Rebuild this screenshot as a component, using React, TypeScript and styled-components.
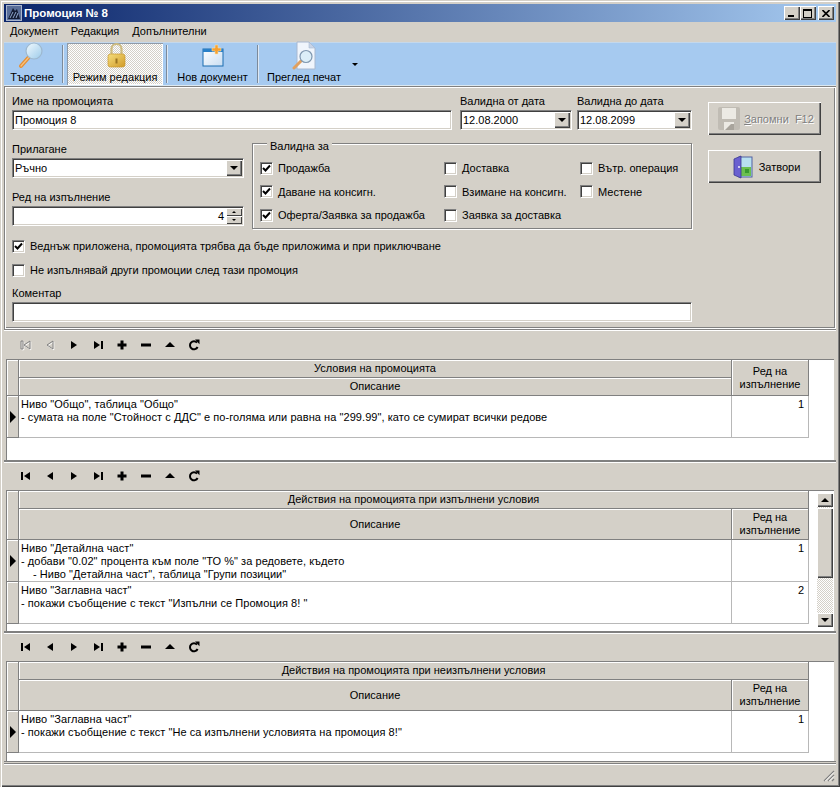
import React from "react";
import styled, { createGlobalStyle } from "styled-components";

const FACE = "#D4D0C8";
const Global = createGlobalStyle`
  html, body { margin: 0; padding: 0; background: ${FACE}; }
  body { font-family: "Liberation Sans", Arial, sans-serif; font-size: 11px; color: #000; }
  * { box-sizing: border-box; }
`;

const Win = styled.div`
  width: 840px; height: 787px; background: ${FACE}; display: flex; flex-direction: column;
  padding: 4px; overflow: hidden;
  box-shadow: inset 1px 1px 0 ${FACE}, inset 2px 2px 0 #fff, inset -1px -1px 0 #404040, inset -2px -2px 0 #808080;
`;
const TitleBar = styled.div`
  height: 18px; flex: none; display: flex; align-items: center; padding: 0 2px;
  background: linear-gradient(90deg, #0A246A, #A6CAF0);
`;
const TitleText = styled.span`
  color: #fff; font-weight: bold; font-size: 11.5px; margin-left: 2px; flex: 1;
`;
const CapBtn = styled.div<{ $gap?: number }>`
  width: 16px; height: 14px; background: ${FACE}; margin-left: ${p => p.$gap ?? 0}px;
  box-shadow: inset 1px 1px 0 #fff, inset -1px -1px 0 #404040, inset -2px -2px 0 #808080;
  display: flex; align-items: center; justify-content: center;
`;
const MenuBar = styled.div`
  height: 20px; flex: none; display: flex; align-items: center; gap: 12px; padding: 0 6px 2px;
`;
const MenuItem = styled.span<{ $ml?: number }>`font-size: 11px; margin-left: ${p => p.$ml ?? 0}px;`;
const ToolBar = styled.div`
  height: 44px; flex: none; display: flex; align-items: stretch; background: #A6CAF0;
  border-top: 1px solid #C4D8EC; border-bottom: 1px solid #DCE8F0;
`;
const ToolBtn = styled.div<{ $w: number; $on?: boolean }>`
  width: ${p => p.$w}px; display: flex; flex-direction: column; align-items: center; justify-content: flex-end;
  padding-bottom: 1px; line-height: 13px; position: relative;
  ${p => p.$on ? `
    background: repeating-conic-gradient(#fff 0 25%, ${FACE} 0 50%) 0 0 / 2px 2px;
    box-shadow: inset 1px 1px 0 #8E9AA8, inset -1px -1px 0 #fff;
  ` : ""}
  svg { flex: none; margin-bottom: 1px; }
`;
const ToolSep = styled.div<{ $l: number; $r: number }>`
  width: 2px; margin: 2px ${p => p.$r}px 2px ${p => p.$l}px;
  background: linear-gradient(90deg, #7C8A9A 50%, #DDE8F4 50%);
`;
const Caret = styled.div`
  width: 0; height: 0; align-self: center; margin: 0 0 0 4px;
  border-left: 3px solid transparent; border-right: 3px solid transparent; border-top: 3px solid #000;
`;

const Form = styled.div`
  height: 243px; flex: none; display: flex; padding: 8px 0 0 8px;
  box-shadow: inset 1px 1px 0 #808080, inset 2px 2px 0 #fff, inset -1px -1px 0 #fff, inset -2px -2px 0 #808080;
`;
const FormLeft = styled.div`width: 680px; flex: none; display: flex; flex-direction: column;`;
const FormRight = styled.div`
  margin: 8px 0 0 16px; width: 113px; display: flex; flex-direction: column; gap: 15px;
`;
const TopRow = styled.div`display: flex; margin-bottom: 12px;`;
const Field = styled.div<{ $w: number; $mr?: number; $mt?: number }>`
  width: ${p => p.$w}px; margin-right: ${p => p.$mr ?? 0}px; margin-top: ${p => p.$mt ?? 0}px; flex: none;
`;
const Label = styled.div`height: 14px; line-height: 14px; margin-bottom: 2px;`;
const Sunken = styled.div<{ $align?: string }>`
  height: 20px; background: #fff; display: flex; align-items: center; justify-content: space-between;
  padding: 0 2px; line-height: 14px; font-size: 11px;
  border: 1px solid; border-color: #808080 #fff #fff #808080;
  box-shadow: inset 1px 1px 0 #404040, inset -1px -1px 0 ${FACE};
  ${p => p.$align === "right" ? "justify-content: flex-end;" : ""}
`;
const Arrow = styled.div<{ $up?: boolean; $s?: number }>`
  width: 0; height: 0;
  border-left: ${p => p.$s ?? 4}px solid transparent; border-right: ${p => p.$s ?? 4}px solid transparent;
  ${p => `border-${p.$up ? "bottom" : "top"}: ${p.$s ?? 4}px solid #000;`}
`;
const DropBtn = styled.div`
  width: 16px; height: 16px; margin-right: -1px; background: ${FACE}; flex: none;
  display: flex; align-items: center; justify-content: center;
  box-shadow: inset 1px 1px 0 #fff, inset -1px -1px 0 #404040, inset -2px -2px 0 #808080;
`;
const SpinBox = styled.div`display: flex; flex-direction: column; width: 16px; height: 16px; margin: 0 -1px 0 2px; flex: none;`;
const SpinBtn = styled.div`
  flex: 1; background: ${FACE}; display: flex; align-items: center; justify-content: center;
  box-shadow: inset 1px 1px 0 #fff, inset -1px -1px 0 #404040;
`;
const MidRow = styled.div`display: flex;`;
const LeftStack = styled.div`width: 232px; flex: none; display: flex; flex-direction: column;`;
const Group = styled.fieldset`
  margin: -6px 0 0 8px; padding: 6px 0 0 7px; width: 440px; height: 93px; flex: none;
  border: 1px solid #808080; box-shadow: 1px 1px 0 #fff, inset 1px 1px 0 #fff;
  display: grid; grid-template-columns: 184px 136px 1fr; grid-auto-rows: 23.5px; align-content: start;
`;
const Legend = styled.legend`
  margin-left: 7px; padding: 0 3px; line-height: 14px; background: ${FACE}; position: relative; top: 3px;
`;
const CheckRow = styled.label`display: flex; align-items: center; gap: 5px; white-space: nowrap; height: 24px;`;
const CheckBox = styled.span`
  width: 13px; height: 13px; flex: none; background: #fff; display: flex; align-items: center; justify-content: center;
  border: 1px solid; border-color: #808080 #fff #fff #808080;
  box-shadow: inset 1px 1px 0 #404040, inset -1px -1px 0 ${FACE};
`;
const CheckStack = styled.div`margin-top: 5px;`;
const CommentField = styled.div`margin-top: 4px;`;
const ActionBtn = styled.div<{ $gap: number; $pl: number }>`
  height: 33px; background: ${FACE}; display: flex; align-items: center; justify-content: center;
  gap: ${p => p.$gap}px; padding-left: ${p => p.$pl}px;
  box-shadow: inset 1px 1px 0 #fff, inset -1px -1px 0 #404040, inset -2px -2px 0 #808080;
`;
const Disabled = styled.span`color: #808080; text-shadow: 1px 1px 0 #fff; u { text-decoration: underline; }`;

const Panel = styled.div<{ $h: number }>`
  height: ${p => p.$h}px; flex: none; display: flex; flex-direction: column; padding: 1px 2px 1px 2px;
  box-shadow: inset 0 1px 0 #808080, inset 0 2px 0 #fff, inset 0 -1px 0 #808080;
`;
const NavBar = styled.div<{ $h: number }>`
  height: ${p => p.$h}px; flex: none; display: flex; align-items: center; padding: 0 0 0 8px;
`;
const NavBtn = styled.div`width: 24px; display: flex; justify-content: center;`;
const GridArea = styled.div`
  flex: 1; min-height: 0; background: #fff; display: flex; justify-content: space-between;
  border-left: 1px solid #808080; border-top: 1px solid #808080; overflow: hidden;
`;
const Table = styled.table`
  border-collapse: separate; border-spacing: 0; table-layout: fixed; width: 802px; height: fit-content;
  flex: none; font-size: 11px;
`;
const Head = styled.th<{ $h?: number }>`
  background: ${FACE}; font-weight: normal; text-align: center; padding: 0; line-height: 13px;
  height: ${p => p.$h ?? 17}px;
  border-right: 1px solid #808080; border-bottom: 1px solid #808080;
  box-shadow: inset 1px 1px 0 #fff;
`;
const Ind = styled.td`
  background: ${FACE}; padding: 0; text-align: center; vertical-align: middle;
  border-right: 1px solid #808080; border-bottom: 1px solid #808080;
  box-shadow: inset 1px 1px 0 #fff;
`;
const Pointer = styled.div`
  width: 0; height: 0; margin-left: 3px; border-top: 6px solid transparent; border-bottom: 6px solid transparent;
  border-left: 6px solid #000;
`;
const Cell = styled.td<{ $h: number; $num?: boolean }>`
  height: ${p => p.$h}px; padding: 2px ${p => p.$num ? 4 : 2}px 0; vertical-align: top; line-height: 13px;
  text-align: ${p => p.$num ? "right" : "left"};
  border-right: 1px solid #B8B8B8; border-bottom: 1px solid #B8B8B8;
`;
const Line = styled.div<{ $indent?: boolean }>`
  white-space: nowrap; letter-spacing: 0.06px; padding-left: ${p => p.$indent ? 12 : 0}px;
`;
const Scroll = styled.div`
  width: 16px; margin: 2px 1px 0 0; height: 134px; display: flex; flex-direction: column; flex: none;
  background: repeating-conic-gradient(#fff 0 25%, ${FACE} 0 50%) 0 0 / 2px 2px;
`;
const ScrollBtn = styled.div`
  height: 14px; flex: none; background: ${FACE}; display: flex; align-items: center; justify-content: center;
  box-shadow: inset 1px 1px 0 #fff, inset -1px -1px 0 #404040, inset -2px -2px 0 #808080;
`;
const Thumb = styled.div`
  height: 70px; flex: none; background: ${FACE}; margin-top: 1px;
  box-shadow: inset 1px 1px 0 #fff, inset -1px -1px 0 #404040, inset -2px -2px 0 #808080;
`;
const Spacer = styled.div`flex: 1;`;
const Status = styled.div`
  flex: 1; display: flex; justify-content: flex-end; align-items: flex-end; margin: 1px 0 0;
  border-top: 1px solid #808080; box-shadow: inset 0 1px 0 #fff; padding: 0 1px 1px 0;
`;

const Check = () => (
  <svg width="9" height="9" viewBox="0 0 9 9"><path d="M1 4 L3.5 6.5 L8 1.5" fill="none" stroke="#000" strokeWidth="2" /></svg>
);
const Cb = ({ on, children }: { on?: boolean; children: React.ReactNode }) => (
  <CheckRow><CheckBox>{on ? <Check /> : null}</CheckBox>{children}</CheckRow>
);

const NavIcon = ({ k, off }: { k: string; off?: boolean }) => {
  const paths: Record<string, string> = {
    first: "M1 2h2v8H1z M10 2v8L4 6z",
    prev: "M9 2v8L3 6z",
    next: "M3 2v8l6-4z",
    last: "M9 2h2v8H9z M2 2v8l6-4z",
    plus: "M4.5 1.5h3v3h3v3h-3v3h-3v-3h-3v-3h3z",
    minus: "M1 4.5h10v3H1z",
    up: "M6 3l5 5H1z",
  };
  if (k === "ref") {
    return (
      <svg width="12" height="12" viewBox="0 0 12 12">
        <path d="M9 3.6A4 4 0 1 0 9.6 8" fill="none" stroke="#000" strokeWidth="2" />
        <path d="M7 0.5l4.5 0v4.8z" fill="#000" />
      </svg>
    );
  }
  return (
    <svg width="12" height="12" viewBox="0 0 12 12">
      {off ? <path d={paths[k]} fill="none" stroke="#fff" strokeWidth="1" transform="translate(.8 .8)" /> : null}
      <path d={paths[k]} fill={off ? "none" : "#000"} stroke={off ? "#808080" : "none"} strokeWidth="1" />
    </svg>
  );
};
const Nav = ({ h, off }: { h: number; off?: boolean }) => (
  <NavBar $h={h}>
    {["first", "prev", "next", "last", "plus", "minus", "up", "ref"].map((k, i) => (
      <NavBtn key={k}><NavIcon k={k} off={off && i < 2} /></NavBtn>
    ))}
  </NavBar>
);

const RedHead = () => <>Ред на<br />изпълнение</>;

type Row = { lines: (string | [string])[]; n: number; cur?: boolean; h: number };
const Rows = ({ rows }: { rows: Row[] }) => (
  <>
    {rows.map((r) => (
      <tr key={r.n}>
        <Ind>{r.cur ? <Pointer /> : null}</Ind>
        <Cell $h={r.h}>
          {r.lines.map((l, i) =>
            typeof l === "string" ? <Line key={i}>{l}</Line> : <Line key={i} $indent>{l[0]}</Line>
          )}
        </Cell>
        <Cell $h={r.h} $num>{r.n}</Cell>
      </tr>
    ))}
  </>
);
const Cols = () => (
  <colgroup><col width="12" /><col width="713" /><col width="77" /></colgroup>
);

const Search = () => (
  <svg width="30" height="30" viewBox="0 0 30 30">
    <defs>
      <linearGradient id="glass" x1="0" y1="0" x2="1" y2="1">
        <stop offset="0" stopColor="#F2FAFE" /><stop offset="1" stopColor="#9CCBEA" />
      </linearGradient>
    </defs>
    <path d="M12 17L4 26" stroke="#E58F35" strokeWidth="4" strokeLinecap="round" />
    <path d="M12 17L4 26" stroke="#F7C27E" strokeWidth="1.2" strokeLinecap="round" />
    <circle cx="17" cy="11" r="8" fill="url(#glass)" stroke="#9DB8CF" strokeWidth="1.2" />
  </svg>
);
const Lock = () => (
  <svg width="30" height="30" viewBox="0 0 30 30">
    <defs>
      <linearGradient id="gold" x1="0" y1="0" x2="1" y2="1">
        <stop offset="0" stopColor="#F6DE7C" /><stop offset="1" stopColor="#D09A28" />
      </linearGradient>
    </defs>
    <path d="M11.5 14V9a5 5 0 0 1 10 0v5" fill="none" stroke="#CDBB80" strokeWidth="2.2" />
    <rect x="8" y="14" width="17" height="13" rx="2.5" fill="url(#gold)" stroke="#C8982E" strokeWidth=".7" />
    <rect x="15.5" y="18.5" width="2" height="5" fill="#9A7420" />
  </svg>
);
const NewDoc = () => (
  <svg width="30" height="30" viewBox="0 0 30 30">
    <defs>
      <linearGradient id="sheet" x1="0" y1="0" x2="1" y2="1">
        <stop offset="0" stopColor="#FFFFFF" /><stop offset="1" stopColor="#C8DDF2" />
      </linearGradient>
    </defs>
    <rect x="5" y="9" width="20" height="17" fill="url(#sheet)" stroke="#1A6CB0" strokeWidth="1" />
    <rect x="5" y="9" width="20" height="3" fill="#2A80C8" />
    <path d="M17 5h3v3h3v3h-3v3h-3v-3h-3V8h3z" fill="#F5A030" stroke="#F7E0B0" strokeWidth=".6" />
  </svg>
);
const Preview = () => (
  <svg width="30" height="30" viewBox="0 0 30 30">
    <path d="M8 2h12l6 6v21H8z" fill="#F0F5FC" stroke="#A8B8D0" />
    <path d="M20 2v6h6z" fill="#C8D4E8" stroke="#A8B8D0" strokeWidth=".6" />
    <path d="M12 21L5 28" stroke="#E0A060" strokeWidth="3" strokeLinecap="round" />
    <circle cx="17" cy="16.5" r="6" fill="#DCEEF8" stroke="#8098B0" strokeWidth="1.2" />
  </svg>
);
const Save = () => (
  <svg width="24" height="24" viewBox="0 0 24 24">
    <rect x="1" y="0" width="22" height="23" rx="2" fill="#C0BCB4" />
    <rect x="5" y="1" width="14" height="11" fill="#ECEAE4" />
    <rect x="7" y="15" width="10" height="8" fill="#ECEAE4" />
    <path d="M8 23l6-6h3v6z" fill="#A8A49C" />
  </svg>
);
const Door = () => (
  <svg width="20" height="24" viewBox="0 0 20 24">
    <rect x="6" y="2" width="13" height="20" fill="#B8E0F0" stroke="#5060A0" />
    <rect x="7" y="12" width="11" height="9" fill="#6CC050" />
    <rect x="12" y="14" width="4" height="4" fill="#3A9A30" />
    <path d="M1 4L8 1v22L1 20z" fill="#6A60D0" stroke="#3A3890" strokeWidth=".8" />
    <circle cx="6" cy="12" r=".9" fill="#fff" />
  </svg>
);

export default function App() {
  return (
    <Win>
      <Global />
      <TitleBar>
        <svg width="16" height="16" viewBox="0 0 16 16">
          <rect width="16" height="16" fill="#A8B4CC" />
          <rect x="1" y="1" width="14" height="14" fill="#5A6E98" />
          <path d="M2 14L7 3l2 3 2-2 3 10z" fill="#141C34" />
          <path d="M4 13l3-6M7 13l3-6M10 13l2-5" stroke="#8FA6CC" strokeWidth="1" />
        </svg>
        <TitleText>Промоция № 8</TitleText>
        <CapBtn><svg width="8" height="8" viewBox="0 0 8 8"><rect x="0" y="6" width="6" height="2" /></svg></CapBtn>
        <CapBtn><svg width="10" height="9" viewBox="0 0 10 9"><path d="M0 0h9v9H0z M1 2v6h7V2z" fillRule="evenodd" /></svg></CapBtn>
        <CapBtn $gap={2}><svg width="8" height="7" viewBox="0 0 8 7"><path d="M0.5 0L7.5 7M7.5 0L0.5 7" stroke="#000" strokeWidth="1.6" /></svg></CapBtn>
      </TitleBar>
      <MenuBar>
        <MenuItem>Документ</MenuItem>
        <MenuItem>Редакция</MenuItem>
        <MenuItem $ml={1}>Допълнителни</MenuItem>
      </MenuBar>
      <ToolBar>
        <ToolBtn $w={56}><Search />Търсене</ToolBtn>
        <ToolSep $l={2} $r={3} />
        <ToolBtn $w={96} $on><Lock />Режим редакция</ToolBtn>
        <ToolSep $l={3} $r={2} />
        <ToolBtn $w={85}><NewDoc />Нов документ</ToolBtn>
        <ToolSep $l={2} $r={1} />
        <ToolBtn $w={88}><Preview />Преглед печат</ToolBtn>
        <Caret />
      </ToolBar>
      <Form>
        <FormLeft>
          <TopRow>
            <Field $w={440} $mr={8}>
              <Label>Име на промоцията</Label>
              <Sunken>Промоция 8</Sunken>
            </Field>
            <Field $w={112} $mr={5}>
              <Label>Валидна от дата</Label>
              <Sunken>12.08.2000<DropBtn><Arrow /></DropBtn></Sunken>
            </Field>
            <Field $w={115}>
              <Label>Валидна до дата</Label>
              <Sunken>12.08.2099<DropBtn><Arrow /></DropBtn></Sunken>
            </Field>
          </TopRow>
          <MidRow>
            <LeftStack>
              <Field $w={232}>
                <Label>Прилагане</Label>
                <Sunken>Ръчно<DropBtn><Arrow /></DropBtn></Sunken>
              </Field>
              <Field $w={232} $mt={12}>
                <Label>Ред на изпълнение</Label>
                <Sunken $align="right">
                  4
                  <SpinBox>
                    <SpinBtn><Arrow $up $s={2} /></SpinBtn>
                    <SpinBtn><Arrow $s={2} /></SpinBtn>
                  </SpinBox>
                </Sunken>
              </Field>
            </LeftStack>
            <Group>
              <Legend>Валидна за</Legend>
              <Cb on>Продажба</Cb><Cb>Доставка</Cb><Cb>Вътр. операция</Cb>
              <Cb on>Даване на консигн.</Cb><Cb>Взимане на консигн.</Cb><Cb>Местене</Cb>
              <Cb on>Оферта/Заявка за продажба</Cb><Cb>Заявка за доставка</Cb>
            </Group>
          </MidRow>
          <CheckStack>
            <Cb on>Веднъж приложена, промоцията трябва да бъде приложима и при приключване</Cb>
            <Cb>Не изпълнявай други промоции след тази промоция</Cb>
          </CheckStack>
          <CommentField>
            <Label>Коментар</Label>
            <Sunken />
          </CommentField>
        </FormLeft>
        <FormRight>
          <ActionBtn $gap={3} $pl={2}><Save /><Disabled><u>З</u>апомни&nbsp; F12</Disabled></ActionBtn>
          <ActionBtn $gap={6} $pl={4}><Door />Затвори</ActionBtn>
        </FormRight>
      </Form>

      <Panel $h={132}>
        <Nav h={29} off />
        <GridArea>
          <Table>
            <Cols />
            <tbody>
              <tr>
                <Head rowSpan={2} />
                <Head $h={18}>Условия на промоцията</Head>
                <Head rowSpan={2}><RedHead /></Head>
              </tr>
              <tr><Head $h={18}>Описание</Head></tr>
              <Rows rows={[{ n: 1, cur: true, h: 42, lines: ['Ниво "Общо", таблица "Общо"', '- сумата на поле "Стойност с ДДС" е по-голяма или равна на "299.99", като се сумират всички редове'] }]} />
            </tbody>
          </Table>
        </GridArea>
      </Panel>

      <Panel $h={171}>
        <Nav h={28} />
        <GridArea>
          <Table>
            <Cols />
            <tbody>
              <tr>
                <Head rowSpan={2} />
                <Head colSpan={2} $h={18}>Действия на промоцията при изпълнени условия</Head>
              </tr>
              <tr><Head $h={31}>Описание</Head><Head $h={31}><RedHead /></Head></tr>
              <Rows rows={[
                { n: 1, cur: true, h: 42, lines: ['Ниво "Детайлна част"', '- добави "0.02" процента към поле "ТО %" за редовете, където', ['- Ниво "Детайлна част", таблица "Групи позиции"']] },
                { n: 2, h: 42, lines: ['Ниво "Заглавна част"', '- покажи съобщение с текст "Изпълни се Промоция 8! "'] },
              ]} />
            </tbody>
          </Table>
          <Scroll>
            <ScrollBtn><Arrow $up $s={4} /></ScrollBtn>
            <Thumb />
            <Spacer />
            <ScrollBtn><Arrow $s={4} /></ScrollBtn>
          </Scroll>
        </GridArea>
      </Panel>

      <Panel $h={130}>
        <Nav h={28} />
        <GridArea>
          <Table>
            <Cols />
            <tbody>
              <tr>
                <Head rowSpan={2} />
                <Head colSpan={2} $h={18}>Действия на промоцията при неизпълнени условия</Head>
              </tr>
              <tr><Head $h={31}>Описание</Head><Head $h={31}><RedHead /></Head></tr>
              <Rows rows={[{ n: 1, cur: true, h: 42, lines: ['Ниво "Заглавна част"', '- покажи съобщение с текст "Не са изпълнени условията на промоция 8!"'] }]} />
            </tbody>
          </Table>
        </GridArea>
      </Panel>

      <Status>
        <svg width="13" height="13" viewBox="0 0 13 13">
          <path d="M12 2L2 12M12 6L6 12M12 10L10 12" stroke="#808080" strokeWidth="1.2" />
          <path d="M12 3.4L3.4 12M12 7.4L7.4 12" stroke="#fff" strokeWidth="1" />
        </svg>
      </Status>
    </Win>
  );
}
